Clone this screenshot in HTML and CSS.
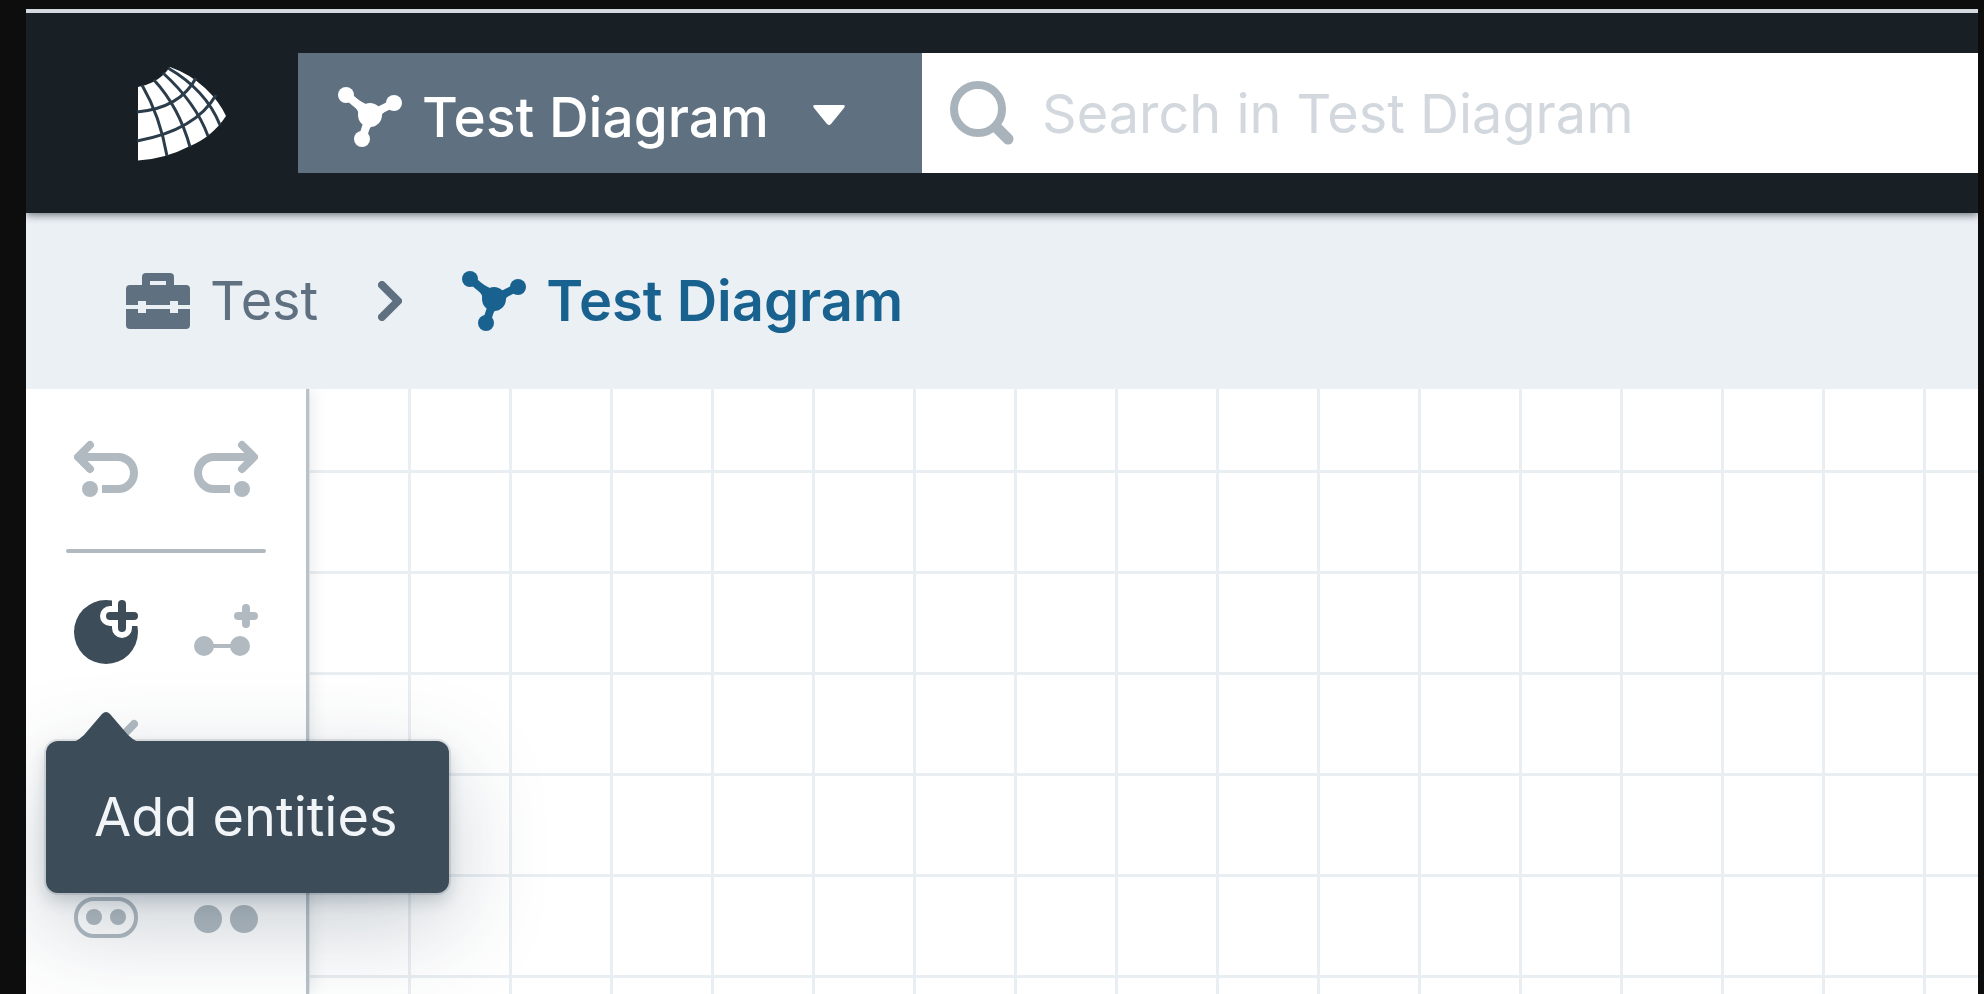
FILE: index.html
```html
<!DOCTYPE html>
<html lang="en">
<head>
<meta charset="utf-8">
<title>Test Diagram</title>
<link rel="stylesheet" href="styles.css">
</head>
<body>
<svg class="defs" aria-hidden="true">
  <symbol id="graph" viewBox="0 0 64 64">
    <path d="M8 10L32 30L56 18M32 30L24 54" fill="none" stroke="currentColor" stroke-width="8"/>
    <path d="M12 17Q18 21 21 29L30 20Q21 16 16 11ZM42 22Q48 21 50 15L54 24Q47 24 43 31ZM26 40Q27 44 22 48L30 50Q28 46 34 41Z" fill="currentColor"/>
    <circle cx="8" cy="10" r="8" fill="currentColor"/><circle cx="56" cy="18" r="8" fill="currentColor"/>
    <circle cx="24" cy="54" r="8" fill="currentColor"/><circle cx="32" cy="30" r="12" fill="currentColor"/>
  </symbol>
  <symbol id="undo" viewBox="0 0 64 64">
    <g fill="none" stroke="currentColor" stroke-width="8">
      <path d="M5 20H44A16 16 0 0 1 44 52H28"/>
      <path d="M16 8L4 20L16 32" stroke-linecap="round" stroke-linejoin="round"/>
    </g>
    <circle cx="16" cy="52" r="8" fill="currentColor"/>
  </symbol>
</svg>
<div class="app">
  <header class="header">
    <a class="logo" href="#" aria-label="Home">
      <svg viewBox="136 64 92 98" width="92" height="98">
        <path fill="#fff" d="M138 87Q145 86 153 82Q163 77 170 67Q190 74 205 88Q219 101 226 116Q212 137 190 146Q165 159 138 160.500Z"/>
        <g fill="none" stroke="#2b3c4b" stroke-width="3">
          <path d="M142 85Q160 116 167 156M154 80Q179 107 190 147M163 73Q196 103 208 136M168 68Q206 90 220 125"/>
          <path d="M137 112Q180 108 196 78M137 141Q196 130 216 95"/>
        </g>
      </svg>
    </a>
    <button class="scope" type="button">
      <svg class="icon" aria-hidden="true"><use href="#graph"/></svg>
      <span>Test Diagram</span>
      <svg class="caret" viewBox="0 0 32 20" aria-hidden="true"><path d="M2 0H30Q33 0 31 3L18 19Q16 21 14 19L1 3Q-1 0 2 0Z" fill="currentColor"/></svg>
    </button>
    <label class="search">
      <svg class="icon" viewBox="0 0 64 64" aria-hidden="true"><g fill="none" stroke="currentColor"><circle cx="28" cy="28" r="24" stroke-width="8"/><path d="M47 47L58 58" stroke-width="11" stroke-linecap="round"/></g></svg>
      <input type="text" aria-label="Search in Test Diagram" placeholder="Search in Test Diagram">
    </label>
  </header>
  <nav class="crumbs" aria-label="Breadcrumb">
    <a class="crumb" href="#">
      <svg class="icon" viewBox="0 2 64 64" aria-hidden="true"><path fill="currentColor" fill-rule="evenodd" d="M16 18V10Q16 6 20 6H44Q48 6 48 10V18H60Q64 18 64 22V38H52V34H44V38H20V34H12V38H0V22Q0 18 4 18ZM24 14V18H40V14ZM0 42H12V46H20V42H44V46H52V42H64V58Q64 62 60 62H4Q0 62 0 58Z"/></svg>
      <span>Test</span>
    </a>
    <svg class="chevron" viewBox="0 0 24 40" aria-hidden="true"><path d="M4 4L20 20L4 36" fill="none" stroke="currentColor" stroke-width="8" stroke-linecap="round" stroke-linejoin="round"/></svg>
    <a class="crumb current" href="#" aria-current="page">
      <svg class="icon" aria-hidden="true"><use href="#graph"/></svg>
      <span>Test Diagram</span>
    </a>
  </nav>
  <main class="workspace">
    <aside class="toolbar">
      <div class="tools">
        <button type="button" aria-label="Undo"><svg class="icon"><use href="#undo"/></svg></button>
        <button type="button" aria-label="Redo"><svg class="icon flip"><use href="#undo"/></svg></button>
      </div>
      <hr>
      <div class="tools">
        <div class="anchor">
          <button class="active" type="button" aria-label="Add entities" aria-describedby="tip">
            <svg class="icon" viewBox="0 0 64 64"><circle cx="32" cy="32" r="32" fill="currentColor"/><path d="M48 -4V28M36 16H70" fill="none" stroke="#fff" stroke-width="20" stroke-linecap="round"/><path d="M48 4V28M36 16H60" fill="none" stroke="currentColor" stroke-width="8" stroke-linecap="round"/></svg>
          </button>
          <div class="tooltip" id="tip" role="tooltip">
            <svg class="arrow" viewBox="0 0 64 32" aria-hidden="true"><path d="M0 32Q6 29 10 25L28 4Q32 0 36 4L54 25Q58 29 64 32Z" fill="currentColor"/></svg>
            Add entities
          </div>
        </div>
        <button type="button" aria-label="Add links"><svg class="icon" viewBox="0 0 64 64"><g fill="none" stroke="currentColor"><path d="M10 46H46" stroke-width="4"/><path d="M52 8V24M44 16H60" stroke-width="8" stroke-linecap="round"/></g><circle cx="10" cy="46" r="10" fill="currentColor"/><circle cx="46" cy="46" r="10" fill="currentColor"/></svg></button>
        <button type="button" aria-label="Select"><svg class="icon" viewBox="0 0 64 64"><path d="M60 29L34 56L28 54" fill="none" stroke="currentColor" stroke-width="8" stroke-linecap="round"/></svg></button>
        <span></span>
        <span></span>
        <span></span>
        <button type="button" aria-label="Group"><svg class="icon" viewBox="0 0 64 64"><rect x="2" y="14" width="60" height="37" rx="18" fill="none" stroke="currentColor" stroke-width="4"/><circle cx="20" cy="32" r="8" fill="currentColor"/><circle cx="44" cy="32" r="8" fill="currentColor"/></svg></button>
        <button type="button" aria-label="Ungroup"><svg class="icon" viewBox="0 0 64 64"><circle cx="14" cy="34" r="14" fill="currentColor"/><circle cx="50" cy="34" r="14" fill="currentColor"/></svg></button>
      </div>
    </aside>
    <section class="canvas" aria-label="Diagram canvas"></section>
  </main>
</div>
</body>
</html>
```
FILE: styles.css
```css
* { box-sizing: border-box; }
body {
  margin: 0;
  background: #0d0d0d;
  font-family: Inter, "Liberation Sans", sans-serif;
  font-size: 54px;
  line-height: 64px;
}
button { padding: 0; border: 0; background: none; color: inherit; font: inherit; }
a { color: inherit; text-decoration: none; }
.defs { position: absolute; width: 0; height: 0; }
.icon { display: block; flex: none; width: 64px; height: 64px; }
.flip { transform: scaleX(-1); }

.app {
  display: flex;
  flex-direction: column;
  height: 100vh;
  padding: 9px 6px 0 26px;
  overflow: hidden;
}
.header {
  position: relative;
  z-index: 1;
  display: flex;
  padding: 40px 0;
  border-top: 4px solid #d3d9de;
  background: #182026;
  box-shadow: 0 2px 8px #18202699;
  clip-path: inset(0 0 -12px 0);
}
.logo { display: flex; align-items: center; width: 272px; padding-left: 110px; }
.logo svg { flex: none; }
.scope {
  display: flex;
  align-items: center;
  width: 624px;
  height: 120px;
  padding: 8px 40px 0;
  background: #5f7081;
  color: #fff;
  font-size: 55px;
  font-weight: 500;
}
.scope span { margin: 0 44px 0 20px; white-space: nowrap; }
.caret { width: 32px; height: 20px; margin-bottom: 4px; }
.search {
  display: flex;
  flex: 1;
  align-items: center;
  gap: 28px;
  min-width: 0;
  padding-left: 28px;
  background: #fff;
  color: #a9b3bb;
}
.search input {
  flex: 1;
  min-width: 0;
  height: 100%;
  padding: 0;
  border: 0;
  outline: 0;
  background: none;
  color: #182026;
  font: inherit;
}
.search input::placeholder { color: #d2d8dd; opacity: 1; }

.crumbs {
  display: flex;
  align-items: center;
  padding: 56px 100px;
  background: #ebf0f5;
  color: #5f7081;
}
.crumb { display: flex; align-items: center; gap: 20px; }
.chevron { width: 24px; height: 40px; margin: 0 60px; }
.current { color: #19628f; font-size: 56px; font-weight: 600; }

.workspace { display: flex; flex: 1; min-height: 0; }
.toolbar {
  position: relative;
  z-index: 1;
  width: 283px;
  padding: 48px 40px 0;
  border-right: 3px solid #b9c2c9;
  background: #fff;
  box-shadow: 2px 0 16px #1820261a;
  clip-path: inset(0 -300px 0 0);
}
.tools {
  display: grid;
  grid-template-columns: 64px 64px;
  grid-auto-rows: 64px;
  gap: 31px 56px;
  padding-left: 8px;
  color: #b1bac1;
}
.toolbar hr { height: 4px; margin: 48px 0 47px; border: 0; border-radius: 2px; background: #b1bac1; }
.anchor { position: relative; }
.active { color: #3d4c59; }
.tooltip {
  position: absolute;
  z-index: 2;
  top: 141px;
  left: -28px;
  padding: 44px 52px 44px 48px;
  border-radius: 12px;
  background: #3d4c59;
  color: #f2f5f8;
  white-space: nowrap;
  box-shadow: 0 0 0 2px #1820261a, 0 8px 16px #28405433, 0 32px 96px #28405440;
}
.arrow { position: absolute; top: -31px; left: 28px; width: 64px; height: 32px; color: #3d4c59; }

.canvas {
  flex: 1;
  background-color: #fff;
  background-image:
    linear-gradient(90deg, #e9eef2 3px, transparent 3px),
    linear-gradient(#e9eef2 3px, transparent 3px);
  background-size: 101px 101px;
  background-position: 99px 81px;
}
```
